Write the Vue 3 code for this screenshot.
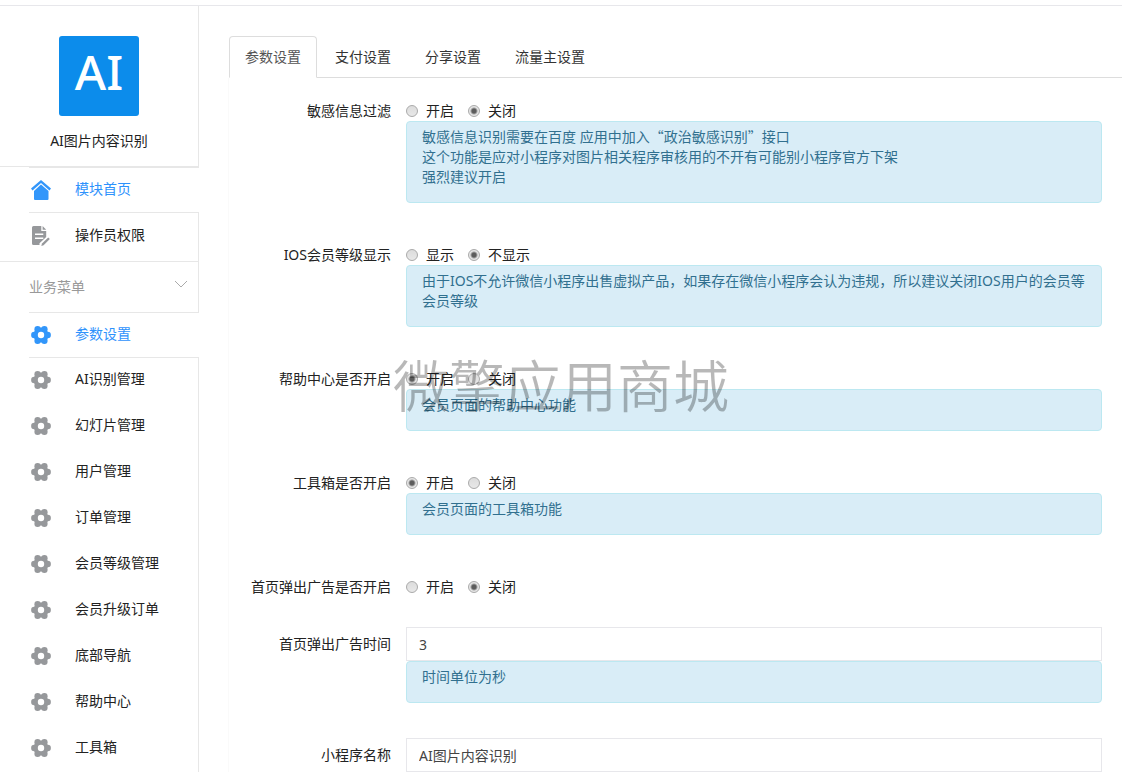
<script setup>
import { reactive } from 'vue'

const menu = ['AI识别管理', '幻灯片管理', '用户管理', '订单管理', '会员等级管理', '会员升级订单', '底部导航', '帮助中心', '工具箱']
const tabs = ['参数设置', '支付设置', '分享设置', '流量主设置']
const rows = reactive([
  { id: 'filter', label: '敏感信息过滤', options: ['开启', '关闭'], value: '关闭', help: ['敏感信息识别需要在百度 应用中加入“政治敏感识别”接口', '这个功能是应对小程序对图片相关程序审核用的不开有可能别小程序官方下架', '强烈建议开启'] },
  { id: 'ios', label: 'IOS会员等级显示', options: ['显示', '不显示'], value: '不显示', help: ['由于IOS不允许微信小程序出售虚拟产品，如果存在微信小程序会认为违规，所以建议关闭IOS用户的会员等会员等级'] },
  { id: 'help', label: '帮助中心是否开启', options: ['开启', '关闭'], value: '开启', help: ['会员页面的帮助中心功能'] },
  { id: 'toolbox', label: '工具箱是否开启', options: ['开启', '关闭'], value: '开启', help: ['会员页面的工具箱功能'] },
  { id: 'popup', label: '首页弹出广告是否开启', options: ['开启', '关闭'], value: '关闭', help: [] },
  { id: 'popup-time', label: '首页弹出广告时间', value: '3', help: ['时间单位为秒'] },
  { id: 'name', label: '小程序名称', value: 'AI图片内容识别', help: [] },
])

// Quoted phrases are set apart so that their quotation marks take full-width glyphs.
const phrases = (line) => line.split(/(“[^”]*”)/)

// Centres of the six gear teeth.
const teeth = [[16.7, 10], [13.4, 15.8], [6.6, 15.8], [3.3, 10], [6.6, 4.2], [13.4, 4.2]]
</script>

<template>
  <div class="page">
    <aside class="sidebar">
      <div class="brand">
        <div class="logo">AI</div>
        <div class="brand-name">AI图片内容识别</div>
      </div>
      <nav>
        <a href="#home" class="item active first">
          <svg class="icon" viewBox="0 0 20 20"><path d="M10 0 L20 8.6 L18.5 10.4 L10 3 L1.5 10.4 L0 8.6 Z" /><path d="M10 4.6 L17.5 11 V19 Q17.5 20 16.5 20 H4 Q3 20 3 19 V11 Z" /></svg>
          <span>模块首页</span>
        </a>
        <a href="#operators" class="item operators">
          <svg class="icon" viewBox="0 0 20 20"><path fill-rule="evenodd" d="M2.5 0 H10.3 V5 H15.2 V11 L8.5 17.3 V19 H2.5 Q1 19 1 17.5 V1.5 Q1 0 2.5 0 Z M4 7.5 V9 H12.3 V7.5 Z M4 11.5 V13 H12.3 V11.5 Z" /><path d="M11.6 0 L15.2 3.8 H11.6 Z" /><path d="M17.2 11.5 L18.8 13 L12.6 19.2 L10.3 20 L11 17.6 Z" /></svg>
          <span>操作员权限</span>
        </a>
        <button type="button" class="group">
          <span>业务菜单</span>
          <svg class="chevron" viewBox="0 0 14 8"><path d="M1 1 L7 7 L13 1" /></svg>
        </button>
        <a href="#settings" class="item active">
          <svg class="icon" viewBox="0 0 20 20"><circle cx="10" cy="10" r="7.6" /><circle v-for="([x, y], i) in teeth" :key="i" :cx="x" :cy="y" r="3.2" /><circle class="hole" cx="10" cy="10" r="3.2" /></svg>
          <span>参数设置</span>
        </a>
        <a v-for="name in menu" :key="name" href="#menu" class="item plain">
          <svg class="icon" viewBox="0 0 20 20"><circle cx="10" cy="10" r="7.6" /><circle v-for="([x, y], i) in teeth" :key="i" :cx="x" :cy="y" r="3.2" /><circle class="hole" cx="10" cy="10" r="3.2" /></svg>
          <span>{{ name }}</span>
        </a>
      </nav>
    </aside>

    <main class="main">
      <nav class="tabs">
        <a v-for="(tab, i) in tabs" :key="tab" href="#tab" class="tab" :class="{ current: i === 0 }">{{ tab }}</a>
      </nav>
      <form class="form" @submit.prevent>
        <div v-for="row in rows" :key="row.id" class="row" :class="{ noted: row.help.length, text: !row.options }">
          <span v-if="row.options" :id="row.id + '-label'" class="label">{{ row.label }}</span>
          <label v-else :for="row.id" class="label">{{ row.label }}</label>
          <div class="field">
            <div v-if="row.options" class="radios" role="radiogroup" :aria-labelledby="row.id + '-label'">
              <label v-for="option in row.options" :key="option" class="choice">
                <input v-model="row.value" type="radio" :name="row.id" :value="option" />{{ option }}
              </label>
            </div>
            <input v-else :id="row.id" v-model="row.value" type="text" class="box" />
            <div v-if="row.help.length" class="help">
              <p v-for="line in row.help" :key="line"><span v-for="(part, i) in phrases(line)" :key="i" :class="{ quoted: i % 2 }">{{ part }}</span></p>
            </div>
          </div>
        </div>
      </form>
    </main>
    <div class="watermark">微擎应用商城</div>
  </div>
</template>

<style>
body { background: #fff; overflow: hidden; }
</style>

<style scoped>
.page {
  position: relative;
  display: flex;
  height: 100vh;
  box-sizing: border-box;
  padding-top: 5px;
  overflow: hidden;
  font: 14px/20px "Noto Sans", "Noto Sans CJK SC", sans-serif;
  color: #222;
}
.page::before { content: ""; position: absolute; top: 5px; left: 0; right: 0; height: 1px; background: #e7e7eb; }
a { color: inherit; text-decoration: none; }
.sidebar { width: 199px; flex: none; box-sizing: border-box; padding-top: 1px; }
.brand {
  height: 161px;
  box-sizing: border-box;
  padding-top: 30px;
  border-right: 1px solid #e7e7e7;
  border-bottom: 1px solid #e7e7e7;
  text-align: center;
}
.logo {
  width: 80px;
  height: 80px;
  margin: 0 auto 15px;
  border-radius: 3px;
  background: #0c8ceb;
  color: #fff;
  font-size: 48px;
  font-weight: 500;
  line-height: 72px;
}
.item {
  display: flex;
  align-items: center;
  height: 45px;
  box-sizing: border-box;
  margin-left: 29px;
  padding-left: 2px;
  gap: 24px;
  border-bottom: 1px solid #e7e7e7;
}
.item span { padding-bottom: 2px; }
.first { height: 46px; border-top: 1px solid #e7e7e7; }
.active { color: #2e92fc; }
.icon { width: 20px; height: 20px; fill: #96989b; }
.icon .hole { fill: #fff; }
.active .icon { fill: #3296fa; }
.operators { height: 49px; margin-left: 0; padding: 0 0 2px 31px; border-right: 1px solid #e7e7e7; }
.group {
  display: flex;
  align-items: center;
  justify-content: space-between;
  width: 170px;
  height: 51px;
  margin: 0 0 0 29px;
  padding: 0 10px 0 0;
  border: solid #e7e7e7;
  border-width: 0 1px 1px 0;
  background: none;
  color: #999;
  font: inherit;
}
.chevron { width: 14px; height: 8px; margin-bottom: 6px; fill: none; stroke: #aaa; }
.plain { height: 46px; padding-bottom: 2px; border-bottom: 0; border-right: 1px solid #e7e7e7; }

.main { flex: 1; min-width: 0; padding: 31px 0 0 29px; }
.tabs { display: flex; gap: 2px; padding-left: 1px; position: relative; }
.tabs::after { content: ""; position: absolute; left: 1px; right: 0; bottom: 0; border-bottom: 1px solid #ddd; }
.tab { z-index: 1; padding: 10px 15px; border: 1px solid transparent; color: #333; }
.current { border-color: #ddd #ddd #fff; border-radius: 4px 4px 0 0; background: #fff; color: #555; }
.form { padding: 23px 20px 0 0; border-left: 1px solid #fafafa; }
.row { display: grid; grid-template-columns: 162px 1fr; column-gap: 15px; margin-bottom: 30px; }
.noted { margin-bottom: 42px; }
.noted.text { margin-bottom: 35px; }
.label { text-align: right; }
.text .label { padding-top: 7px; }
.radios { display: flex; gap: 14px; }
.choice { display: flex; align-items: center; gap: 8px; }
.choice input {
  appearance: none;
  width: 12px;
  height: 12px;
  margin: 0;
  border: 1px solid #aaa;
  border-radius: 50%;
  background: linear-gradient(#dcdcdc, #e8e8e8);
}
.choice input:checked { background: radial-gradient(circle, #5c5c5c 2px, #e6e6e6 4px); }
.box {
  display: block;
  width: 100%;
  height: 34px;
  box-sizing: border-box;
  padding: 6px 12px;
  border: 1px solid #e7e7eb;
  background: #fff;
  color: #444;
  font: inherit;
}
.help {
  padding: 5px 15px 15px;
  border: 1px solid #bce8f1;
  border-radius: 4px;
  background: #d9edf7;
  color: #31708f;
}
.help p { margin: 0; }
.quoted { font-family: "Noto Sans CJK SC", sans-serif; line-height: 1; }
.watermark {
  position: absolute;
  top: 343px;
  left: 393px;
  font: 350 56px/80px "Noto Sans CJK SC", sans-serif;
  color: rgba(0, 0, 0, 0.28);
  white-space: nowrap;
  pointer-events: none;
}
</style>
